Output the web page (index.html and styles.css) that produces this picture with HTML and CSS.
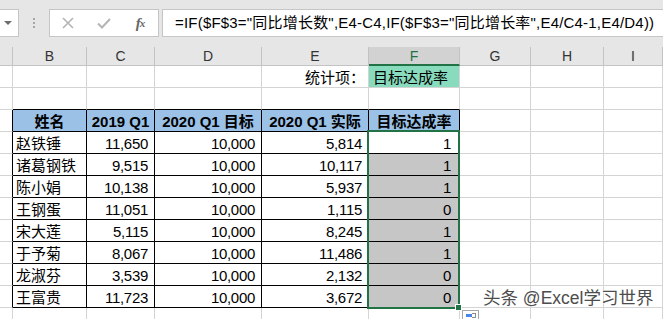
FILE: index.html
```html
<!DOCTYPE html>
<html lang="zh-CN">
<head>
<meta charset="utf-8">
<title>目标达成率</title>
<link rel="stylesheet" href="styles.css">
</head>
<body>
<div class="toolbar">
  <div class="namebox"><span class="caret"></span></div>
  <div class="grip"><i></i><i></i><i></i></div>
  <div class="fnbox">
    <span class="slot"><svg width="12" height="12" viewBox="0 0 12 12"><path d="M1 1L11 11M11 1L1 11" stroke="#b4b4b4" stroke-width="1.6" fill="none"/></svg></span>
    <span class="slot"><svg width="14" height="11" viewBox="0 0 14 11"><path d="M1 5.5L5 9.5L13 1" stroke="#b4b4b4" stroke-width="2" fill="none"/></svg></span>
    <span class="slot fx">f<small>x</small></span>
  </div>
  <div class="formula">=IF($F$3="同比增长数",E4-C4,IF($F$3="同比增长率",E4/C4-1,E4/D4))</div>
</div>

<div class="sheet">
  <div class="c h"></div><div class="c h">B</div><div class="c h">C</div><div class="c h">D</div><div class="c h">E</div><div class="c h sel">F</div><div class="c h">G</div><div class="c h">H</div><div class="c h">I</div>

  <div class="c"></div><div class="c"></div><div class="c"></div><div class="c"></div><div class="c label">统计项：</div><div class="c pick">目标达成率</div><div class="c"></div><div class="c"></div><div class="c"></div>

  <div class="c"></div><div class="c top"></div><div class="c top"></div><div class="c top"></div><div class="c top"></div><div class="c top"></div><div class="c"></div><div class="c"></div><div class="c"></div>

  <div class="c lft"></div><div class="c t th">姓名</div><div class="c t th">2019 Q1</div><div class="c t th">2020 Q1 目标</div><div class="c t th">2020 Q1 实际</div><div class="c t th">目标达成率</div><div class="c"></div><div class="c"></div><div class="c"></div>

  <div class="c lft"></div><div class="c t name">赵铁锤</div><div class="c t num">11,650</div><div class="c t num">10,000</div><div class="c t num">5,814</div><div class="c t num rate">1</div><div class="c"></div><div class="c"></div><div class="c"></div>

  <div class="c lft"></div><div class="c t name">诸葛钢铁</div><div class="c t num">9,515</div><div class="c t num">10,000</div><div class="c t num">10,117</div><div class="c t num rate dim">1</div><div class="c"></div><div class="c"></div><div class="c"></div>

  <div class="c lft"></div><div class="c t name">陈小娟</div><div class="c t num">10,138</div><div class="c t num">10,000</div><div class="c t num">5,937</div><div class="c t num rate dim">1</div><div class="c"></div><div class="c"></div><div class="c"></div>

  <div class="c lft"></div><div class="c t name">王钢蛋</div><div class="c t num">11,051</div><div class="c t num">10,000</div><div class="c t num">1,115</div><div class="c t num rate dim">0</div><div class="c"></div><div class="c"></div><div class="c"></div>

  <div class="c lft"></div><div class="c t name">宋大莲</div><div class="c t num">5,115</div><div class="c t num">10,000</div><div class="c t num">8,245</div><div class="c t num rate dim">1</div><div class="c"></div><div class="c"></div><div class="c"></div>

  <div class="c lft"></div><div class="c t name">于予菊</div><div class="c t num">8,067</div><div class="c t num">10,000</div><div class="c t num">11,486</div><div class="c t num rate dim">1</div><div class="c"></div><div class="c"></div><div class="c"></div>

  <div class="c lft"></div><div class="c t name">龙淑芬</div><div class="c t num">3,539</div><div class="c t num">10,000</div><div class="c t num">2,132</div><div class="c t num rate dim">0</div><div class="c"></div><div class="c"></div><div class="c"></div>

  <div class="c lft"></div><div class="c t name">王富贵</div><div class="c t num">11,723</div><div class="c t num">10,000</div><div class="c t num">3,672</div><div class="c t num rate dim">0</div><div class="c"></div><div class="c"></div><div class="c"></div>

  <div class="c"></div><div class="c"></div><div class="c"></div><div class="c"></div><div class="c"></div><div class="c"></div><div class="c"></div><div class="c"></div><div class="c"></div>
</div>

<div class="selection"></div>
<div class="handle"></div>
<div class="quick"><span class="qa-blue"></span><span class="qa-line"></span></div>
<div class="mark">头条 @Excel学习世界</div>
</body>
</html>
```

FILE: styles.css
```css
html, body {
  margin: 0;
  padding: 0;
}
body {
  width: 663px;
  height: 319px;
  overflow: hidden;
  position: relative;
  background: #ffffff;
  font-family: "Liberation Sans", "Noto Sans CJK SC", sans-serif;
  color: #000;
}

/* ---------- formula bar ---------- */
.toolbar {
  height: 47px;
  background: #e6e6e6;
  display: flex;
  align-items: flex-start;
  padding-top: 9px;
  box-sizing: border-box;
  width: 663px;
}
.namebox {
  width: 19px;
  height: 28px;
  box-sizing: border-box;
  background: #fff;
  border: 1px solid #c6c6c6;
  border-left: none;
  display: flex;
  align-items: center;
  justify-content: center;
}
.caret {
  width: 0;
  height: 0;
  border-left: 4px solid transparent;
  border-right: 4px solid transparent;
  border-top: 4px solid #6d6d6d;
  margin-left: -2px;
}
.grip {
  width: 30px;
  height: 28px;
  display: flex;
  flex-direction: column;
  align-items: center;
  justify-content: center;
  gap: 2px;
}
.grip i {
  display: block;
  width: 2px;
  height: 2px;
  background: #a6a6a6;
}
.fnbox {
  width: 110px;
  height: 28px;
  box-sizing: border-box;
  background: #fff;
  border: 1px solid #c6c6c6;
  display: flex;
  align-items: center;
  padding-left: 7px;
  gap: 14px;
}
.slot {
  width: 22px;
  height: 26px;
  display: flex;
  align-items: center;
  justify-content: center;
}
.fx {
  font-family: "Liberation Serif", serif;
  font-style: italic;
  font-weight: bold;
  font-size: 15px;
  color: #666;
  letter-spacing: -1px;
}
.fx small {
  font-size: 11px;
}
.formula {
  margin-left: 3px;
  flex: 1;
  min-width: 0;
  height: 28px;
  box-sizing: border-box;
  background: #fff;
  border: 1px solid #c6c6c6;
  border-right: none;
  padding-left: 12px;
  font-size: 15px;
  line-height: 26px;
  letter-spacing: 0.2px;
  white-space: nowrap;
  overflow: hidden;
}

/* ---------- sheet grid ---------- */
.sheet {
  display: grid;
  grid-template-columns: 13px 74px 68px 107px 107px 91px 71px 73px 1fr;
  grid-template-rows: 19px repeat(12, 22px);
  width: 663px;
}
.c {
  box-sizing: border-box;
  border-right: 1px solid #d4d4d4;
  border-bottom: 1px solid #d4d4d4;
  font-size: 15px;
  line-height: 19px;
  padding-top: 2px;
  white-space: nowrap;
  overflow: hidden;
}
.h {
  background: #e6e6e6;
  border-right-color: #c3c3c3;
  border-bottom-color: #c3c3c3;
  text-align: center;
  font-size: 14px;
  line-height: 17px;
  padding-top: 1px;
  color: #333;
}
.h.sel {
  background: #d2d2d2;
  color: #217346;
  border-bottom: 2px solid #217346;
}
.label {
  text-align: right;
  padding-right: 3px;
}
.pick {
  background: #88dbbd;
  padding-left: 4px;
}
.top {
  border-bottom-color: #000;
}
.lft {
  border-right-color: #000;
}
.t {
  border-right-color: #000;
  border-bottom-color: #000;
}
.th {
  background: #9bc2e6;
  font-weight: bold;
  text-align: center;
}
.name {
  padding-left: 3px;
}
.num {
  text-align: right;
  padding-right: 6px;
  letter-spacing: -0.3px;
}
.rate {
  padding-right: 8px;
}
.dim {
  background: #c6c6c6;
}

/* ---------- overlays ---------- */
.selection {
  position: absolute;
  left: 367px;
  top: 130px;
  width: 93px;
  height: 179px;
  box-sizing: border-box;
  border: 2px solid #217346;
}
.handle {
  position: absolute;
  left: 455px;
  top: 304px;
  width: 7px;
  height: 7px;
  box-sizing: border-box;
  background: #217346;
  border: 1px solid #fff;
}
.quick {
  position: absolute;
  left: 462px;
  top: 310px;
  width: 17px;
  height: 9px;
  box-sizing: border-box;
  background: #fff;
  border: 1px solid #a6a6a6;
  border-bottom: none;
}
.qa-blue {
  position: absolute;
  left: 3px;
  top: 3px;
  width: 6px;
  height: 3px;
  background: #4a86e8;
}
.qa-line {
  position: absolute;
  left: 9px;
  top: 2px;
  width: 4px;
  height: 5px;
  box-sizing: border-box;
  border: 1px solid #8c8c8c;
  border-left: none;
}
.mark {
  position: absolute;
  left: 483px;
  top: 287px;
  font-size: 17.5px;
  line-height: 22px;
  color: #4d4d4d;
  white-space: nowrap;
  text-shadow: 0 0 2px #fff, 0 0 2px #fff;
}
```
